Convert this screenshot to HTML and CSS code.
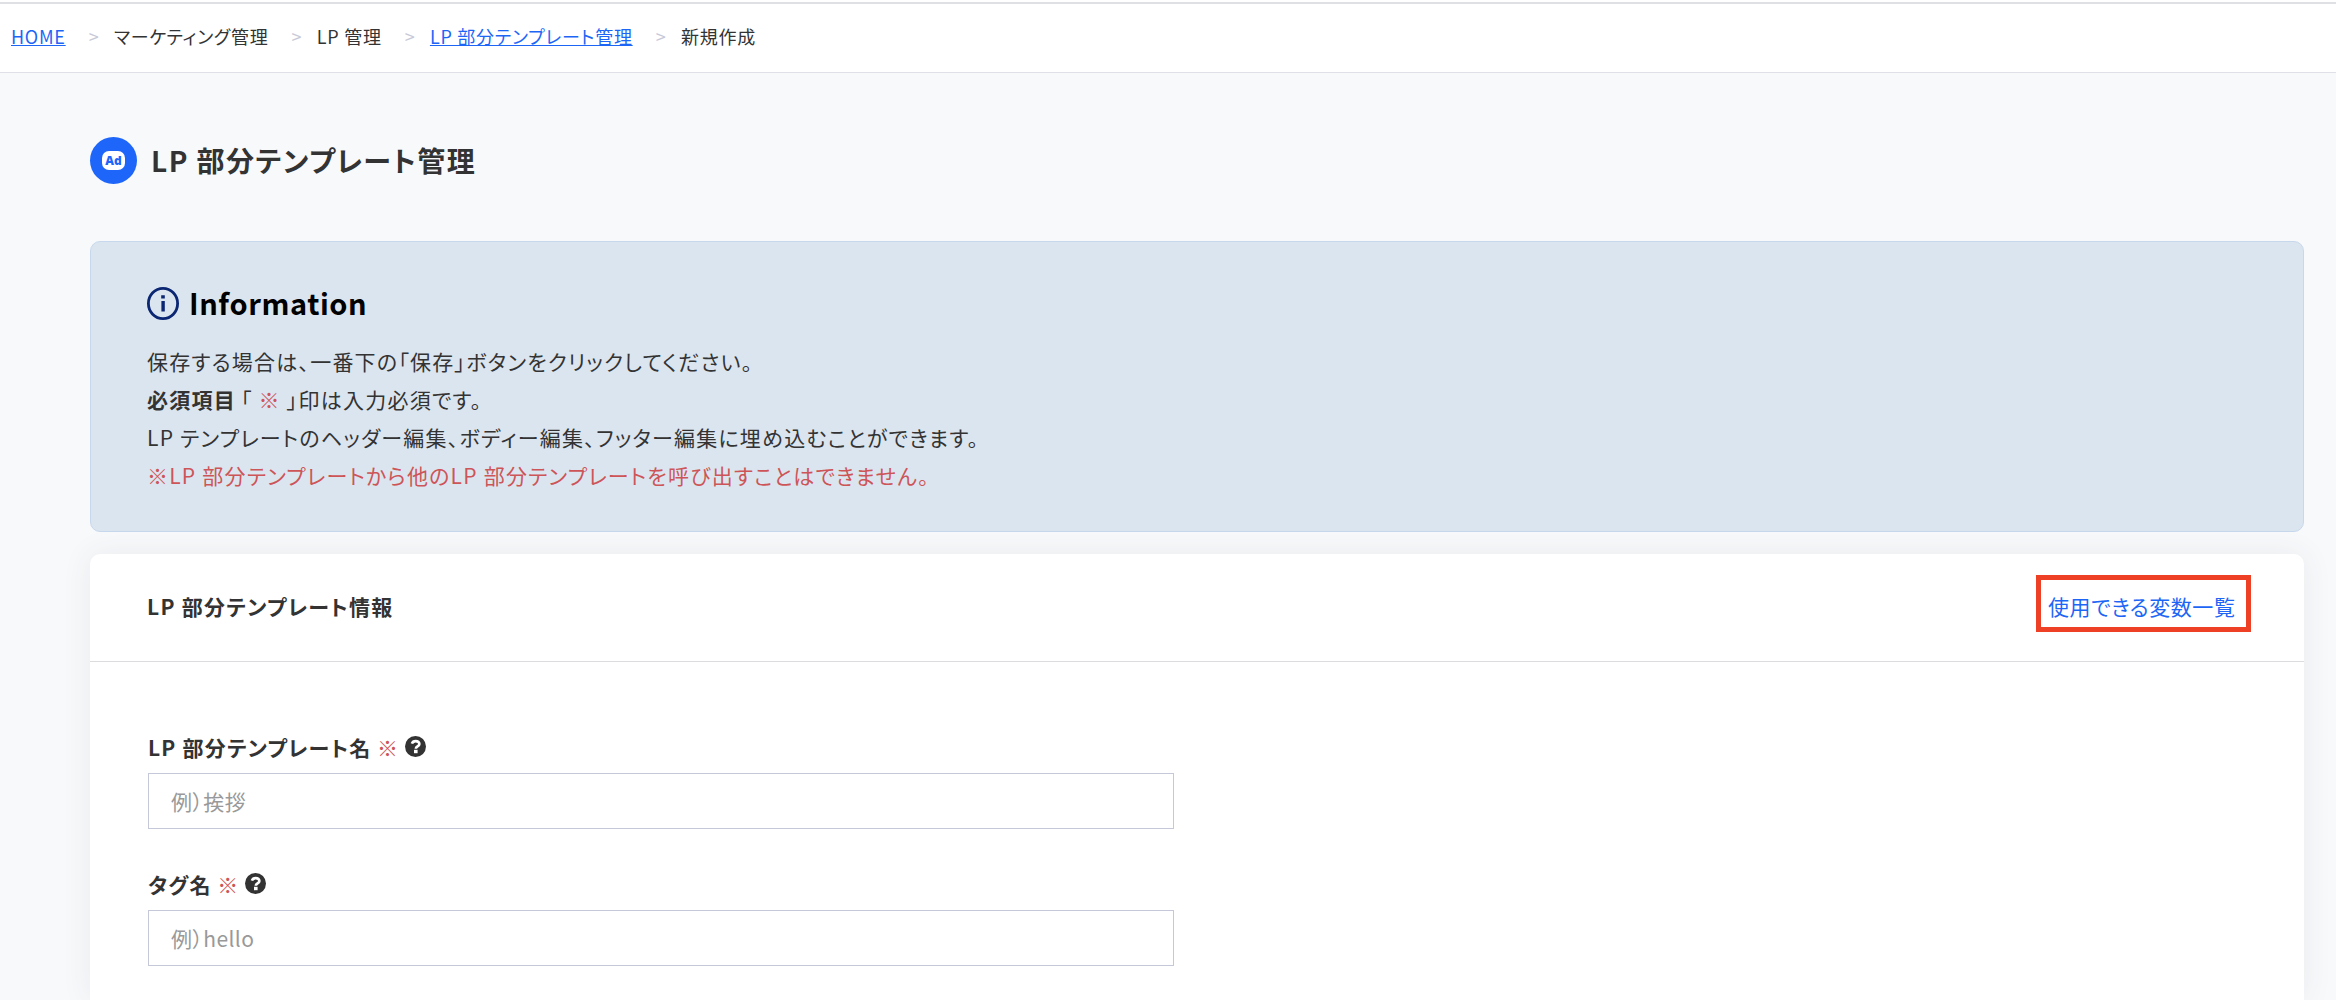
FILE: index.html
```html
<!DOCTYPE html>
<html lang="ja">
<head>
  <meta charset="UTF-8" />
  <meta name="viewport" content="width=device-width, initial-scale=1" />
  <title>LP 部分テンプレート管理</title>
  <link rel="stylesheet" href="styles.css">
</head>
<body>

  <!-- パンくず -->
  <nav class="breadcrumb">
    <ul>
      <li><a href="#">HOME</a></li>
      <li>マーケティング管理</li>
      <li>LP 管理</li>
      <li><a href="#">LP 部分テンプレート管理</a></li>
      <li>新規作成</li>
    </ul>
  </nav>

  <main class="content">
    <div class="page-title">
      <span class="page-icon"><span class="page-icon-label">Ad</span></span>
      <h1>LP 部分テンプレート管理</h1>
    </div>

    <!-- Information -->
    <section class="info-box">
      <h2>
        <svg class="info-icon" viewBox="0 0 32 33" fill="none">
          <ellipse cx="16" cy="16.5" rx="14.6" ry="15.1" stroke="#0b2672" stroke-width="2.8" />
          <path d="M14.2 8.2h3.6v3.2h-3.6zM14.4 14h3.4v10.6h-3.4z" fill="#0b2672" />
        </svg>
        <span>Information</span>
      </h2>
      <p>保存する場合は、一番下の「保存」ボタンをクリックしてください。</p>
      <p><strong>必須項目</strong>「 <span class="required">※</span> 」印は入力必須です。</p>
      <p>LP テンプレートのヘッダー編集、ボディー編集、フッター編集に埋め込むことができます。</p>
      <p class="required">※LP 部分テンプレートから他のLP 部分テンプレートを呼び出すことはできません。</p>
    </section>

    <!-- 入力フォーム -->
    <section class="card">
      <div class="card-header">
        <h3>LP 部分テンプレート情報</h3>
        <a href="#" class="variables-link">使用できる変数一覧</a>
      </div>
      <form class="card-body">
        <div class="form-group">
          <label for="template-name">LP 部分テンプレート名 <span class="required">※</span>
            <svg class="help-icon" viewBox="0 0 21 21" fill="none">
              <circle cx="10.5" cy="10.5" r="10.5" fill="#333" />
              <path d="M6.9 7.7C7.5 5.9 8.8 5.1 10.7 5.1c2.2 0 3.7 1.1 3.7 2.9 0 2.5-3.6 2.4-3.6 4.7" stroke="#fff" stroke-width="2.6" />
              <path d="M9 13.8h3.6v3.4H9z" fill="#fff" />
            </svg>
          </label>
          <input type="text" id="template-name" placeholder="例）挨拶">
        </div>
        <div class="form-group">
          <label for="tag-name">タグ名 <span class="required">※</span>
            <svg class="help-icon" viewBox="0 0 21 21" fill="none">
              <circle cx="10.5" cy="10.5" r="10.5" fill="#333" />
              <path d="M6.9 7.7C7.5 5.9 8.8 5.1 10.7 5.1c2.2 0 3.7 1.1 3.7 2.9 0 2.5-3.6 2.4-3.6 4.7" stroke="#fff" stroke-width="2.6" />
              <path d="M9 13.8h3.6v3.4H9z" fill="#fff" />
            </svg>
          </label>
          <input type="text" id="tag-name" placeholder="例）hello">
        </div>
      </form>
    </section>
  </main>

</body>
</html>
```
FILE: styles.css
```css
* {
  box-sizing: border-box;
}

html {
  height: 100%;
  overflow: hidden;
}

body {
  display: flex;
  flex-direction: column;
  margin: 0;
  height: 100%;
  overflow: hidden;
  font-family: "Noto Sans CJK JP", sans-serif;
  font-feature-settings: "palt";
  font-size: 21px;
  letter-spacing: 1.23px;
  background-color: #f8f9fb;
  color: #333;
}

h1, h2, h3, p, ul {
  margin: 0;
  padding: 0;
}

a {
  color: #1d66f5;
}

.required {
  color: #cd5558;
}

.breadcrumb {
  flex: none;
  height: 71px;
  margin-top: 2px;
  border-top: 2px solid #dfe0e3;
  border-bottom: 1px solid #dfe0e8;
  margin-bottom: 64px;
  background-color: #fff;
  box-shadow: 0 -2px 0 #fff;
  font-size: 18px;
  letter-spacing: 0.75px;
}

.breadcrumb ul {
  display: flex;
  padding-left: 11px;
  list-style: none;
  line-height: 65px;
}

.breadcrumb li + li::before {
  content: ">";
  margin: 0 14.5px 0 23px;
  color: #c8c9d8;
}

.content {
  display: flex;
  flex: 1;
  flex-direction: column;
  min-height: 0;
  padding: 0 32px 0 90px;
}

.page-title {
  display: flex;
  flex: none;
  align-items: center;
  height: 47px;
  margin-bottom: 57px;
}

.page-title h1 {
  margin-left: 14px;
  font-size: 28px;
  line-height: 47px;
  letter-spacing: 1.45px;
}

.page-icon {
  display: flex;
  align-items: center;
  justify-content: center;
  width: 47px;
  height: 47px;
  border-radius: 50%;
  background-color: #1d66f9;
}

.page-icon-label {
  width: 23px;
  height: 19px;
  border-radius: 7px;
  background-color: #fff;
  color: #1d66f9;
  font-family: "Open Sans", sans-serif;
  font-size: 12px;
  font-weight: 800;
  line-height: 19px;
  letter-spacing: 0;
  text-align: center;
}

.info-box {
  flex: none;
  height: 291px;
  padding: 39px 56px 0;
  border: 1px solid #c8d8ec;
  border-radius: 10px;
  background-color: #dbe5ef;
}

.info-box h2 {
  display: flex;
  align-items: center;
  height: 44px;
  margin-bottom: 17px;
  color: #000;
  font-size: 29px;
  line-height: 42px;
  letter-spacing: 0.6px;
}

.info-box h2 span {
  padding-bottom: 2px;
}

.info-icon {
  width: 32px;
  height: 33px;
  margin-right: 10px;
}

.info-box p {
  line-height: 38px;
}

.info-box strong {
  margin-right: 5px;
}

.card {
  flex: 1;
  margin-top: 22px;
  min-height: 0;
  border-radius: 10px 10px 0 0;
  background-color: #fff;
  box-shadow: 0 0 30px rgba(50, 70, 80, 0.08);
}

.card-header {
  display: flex;
  align-items: flex-start;
  justify-content: space-between;
  height: 108px;
  padding: 21px 53px 0 57px;
  border-bottom: 1px solid #dcdcdf;
}

.card-header h3 {
  font-size: 21px;
  line-height: 63px;
  letter-spacing: 1.3px;
}

.variables-link {
  width: 215px;
  height: 57px;
  padding-left: 7px;
  border: 5px solid #ed4024;
  line-height: 53px;
  letter-spacing: 0.6px;
  text-decoration: none;
  white-space: nowrap;
}

.card-body {
  padding: 62px 58px 0;
}

.form-group {
  width: 1026px;
  margin-bottom: 32px;
}

.form-group label {
  display: flex;
  align-items: center;
  height: 45px;
  margin-bottom: 4px;
  font-weight: bold;
}

.form-group .required {
  margin-left: 5.5px;
  font-weight: normal;
}

.help-icon {
  width: 21px;
  height: 21px;
  margin-left: 6px;
}

.form-group input {
  display: block;
  width: 100%;
  height: 56px;
  padding: 0 22px;
  border: 1px solid #c5c8d8;
  font: inherit;
  font-feature-settings: inherit;
  letter-spacing: 0.4px;
}

.form-group input::placeholder {
  color: #999;
}
```
